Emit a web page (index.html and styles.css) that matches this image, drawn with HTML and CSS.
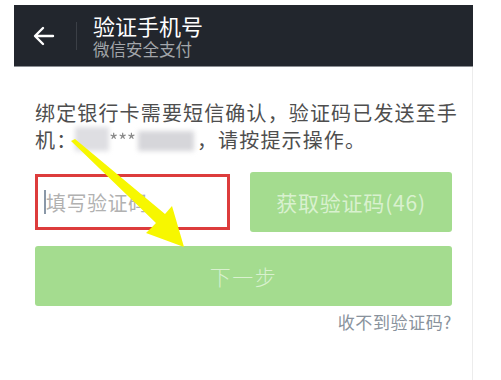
FILE: index.html
```html
<!DOCTYPE html>
<html lang="zh">
<head>
<meta charset="utf-8">
<title>验证手机号</title>
<link rel="stylesheet" href="styles.css">
</head>
<body>
<div class="screen">
  <header class="topbar">
    <div class="back">
      <svg width="22" height="20" viewBox="0 0 22 20"><path d="M20 10H3M10 2L2 10L10 18" fill="none" stroke="#fff" stroke-width="2.4" stroke-linecap="round" stroke-linejoin="round"/></svg>
    </div>
    <div class="divider"></div>
    <div class="titles">
      <div class="title">验证手机号</div>
      <div class="subtitle">微信安全支付</div>
    </div>
  </header>
  <main class="content">
    <p class="desc">绑定银行卡需要短信确认，验证码已发送至手<br>机：<span class="blur b1"></span><span class="stars">***</span><span class="blur b2"></span>，请按提示操作。</p>
    <div class="row">
      <div class="input"><span class="cursor"></span><span class="ph">填写验证码</span></div>
      <div class="btn get">获取验证码(46)</div>
    </div>
    <div class="btn next">下一步</div>
    <div class="help">收不到验证码?</div>
  </main>
</div>
<svg class="annot" width="501" height="380" viewBox="0 0 501 380">
  <polygon points="71,141 75,139 165,214 172,206 184,247 146,233 156,223" fill="#f7f700"/>
</svg>
</body>
</html>
```
FILE: styles.css
```css
* { box-sizing: border-box; }
html, body { margin: 0; padding: 0; background: #fff; }
body {
  width: 501px;
  height: 380px;
  overflow: hidden;
  position: relative;
  font-family: "Noto Sans CJK SC", "Noto Sans", sans-serif;
}
.screen {
  margin: 5px 0 0 14px;
  width: 459px;
  height: 375px;
  border-right: 1px solid #ececec;
  display: flex;
  flex-direction: column;
}
.topbar {
  height: 62px;
  background: #22262d;
  border-bottom: 1px solid #8c8f94;
  display: flex;
  align-items: center;
  margin-right: -1px;
}
.back {
  width: 62px;
  display: flex;
  justify-content: center;
  padding-right: 2px;
}
.divider {
  width: 1px;
  height: 28px;
  background: #3b3f46;
}
.titles {
  margin-left: 16px;
  display: flex;
  flex-direction: column;
  gap: 2px;
}
.title {
  color: #fff;
  font-size: 22px;
  line-height: 24px;
}
.subtitle {
  color: #a3a6aa;
  font-size: 16.5px;
  line-height: 20px;
}
.content {
  padding: 32px 20px 0 21px;
  display: flex;
  flex-direction: column;
}
.desc {
  margin: 0;
  font-size: 20px;
  line-height: 27px;
  letter-spacing: 1.15px;
  color: #4e4e4e;
  white-space: nowrap;
}
.blur {
  display: inline-block;
  background: #d6d6da;
  vertical-align: -3px;
  filter: blur(2.5px);
}
.b1 { width: 34px; height: 24px; margin-left: -2px; background: #dedee2; }
.b2 { width: 56px; height: 20px; margin-left: 2px; margin-right: 3px; }
.stars {
  color: #8a8a8a;
  font-size: 19px;
  letter-spacing: 0;
  filter: blur(0.4px);
}
.row {
  margin-top: 19px;
  display: flex;
  align-items: center;
  gap: 20px;
}
.input {
  width: 195px;
  height: 56px;
  border: 3px solid #dd3c3c;
  display: flex;
  align-items: center;
  padding-left: 6px;
}
.cursor {
  width: 2px;
  height: 24px;
  background: #8a98a8;
}
.ph {
  color: #b1b1b1;
  font-size: 20px;
  letter-spacing: 0.5px;
}
.btn {
  background: #a4dc8f;
  border-radius: 3px;
  color: #d9f1cf;
  display: flex;
  align-items: center;
  justify-content: center;
  height: 60px;
}
.get {
  flex: 1;
  font-size: 21px;
  letter-spacing: 0.8px;
}
.next {
  margin-top: 14px;
  font-size: 21px;
  letter-spacing: 1.5px;
  font-weight: 300;
}
.help {
  align-self: flex-end;
  margin-top: 4px;
  color: #89929c;
  font-size: 17px;
  letter-spacing: 0.6px;
  line-height: 24px;
}
.annot {
  position: absolute;
  left: 0;
  top: 0;
  pointer-events: none;
  filter: blur(0.6px);
}
```
